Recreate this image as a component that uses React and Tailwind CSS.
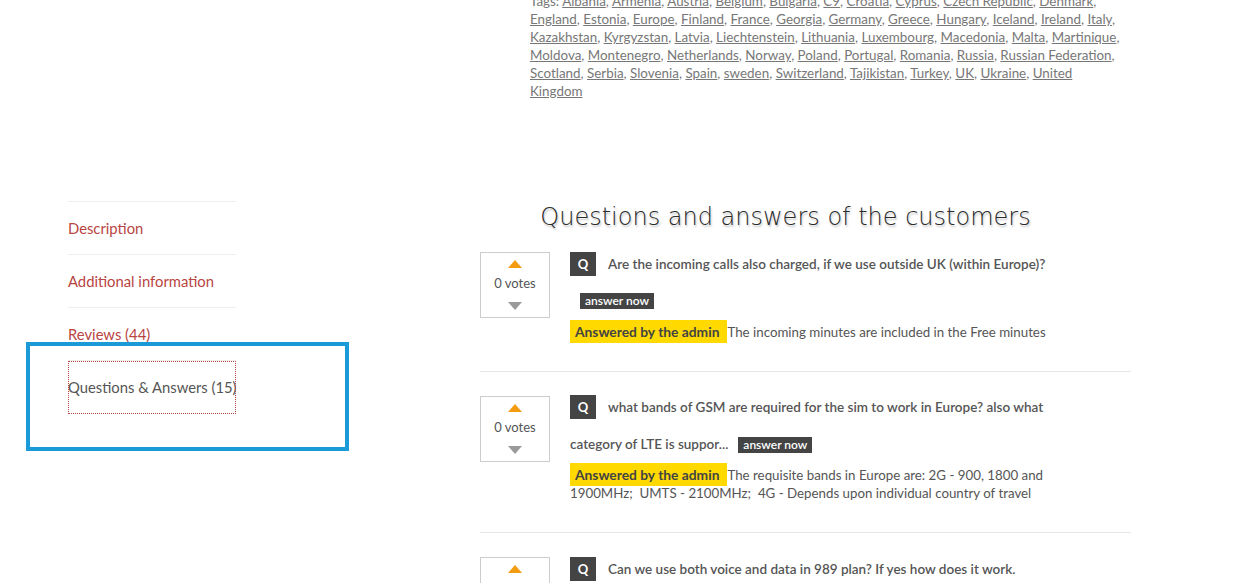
import React from 'react';

const tags = [
  'Albania', 'Armenia', 'Austria', 'Belgium', 'Bulgaria', 'C9', 'Croatia', 'Cyprus', 'Czech Republic', 'Denmark',
  'England', 'Estonia', 'Europe', 'Finland', 'France', 'Georgia', 'Germany', 'Greece', 'Hungary', 'Iceland', 'Ireland', 'Italy',
  'Kazakhstan', 'Kyrgyzstan', 'Latvia', 'Liechtenstein', 'Lithuania', 'Luxembourg', 'Macedonia', 'Malta', 'Martinique',
  'Moldova', 'Montenegro', 'Netherlands', 'Norway', 'Poland', 'Portugal', 'Romania', 'Russia', 'Russian Federation',
  'Scotland', 'Serbia', 'Slovenia', 'Spain', 'sweden', 'Switzerland', 'Tajikistan', 'Turkey', 'UK', 'Ukraine', 'United Kingdom',
];

const tabs = [
  { label: 'Description' },
  { label: 'Additional information' },
  { label: 'Reviews (44)' },
  { label: 'Questions & Answers (15)', active: true },
];

const questions = [
  {
    q: 'Are the incoming calls also charged, if we use outside UK (within Europe)?',
    a: 'The incoming minutes are included in the Free minutes',
  },
  {
    q: 'what bands of GSM are required for the sim to work in Europe? also what category of LTE is suppor...',
    a: 'The requisite bands in Europe are: 2G - 900, 1800 and 1900MHz;\u00a0 UMTS - 2100MHz;\u00a0 4G - Depends upon individual country of travel',
  },
  {
    q: 'Can we use both voice and data in 989 plan? If yes how does it work.',
    a: 'Yes',
  },
];

const font = { fontFamily: '"Source Sans Pro", Lato, "Noto Sans", sans-serif' };

const VoteBox = () => (
  <div className="w-[70px] h-[66px] shrink-0 border border-[#cccccc] flex flex-col items-center pt-[7px]">
    <div className="w-0 h-0 border-l-[7px] border-r-[7px] border-b-[8px] border-l-transparent border-r-transparent border-b-[#f39c12]" />
    <div className="text-[13px] leading-[18px] text-[#555] mt-[6px]">0 votes</div>
    <div className="w-0 h-0 border-l-[7px] border-r-[7px] border-t-[8px] border-l-transparent border-r-transparent border-t-[#9a9a9a] mt-[10px]" />
  </div>
);

const QuestionItem = ({ item, first }) => (
  <div className={`flex items-start gap-[20px] border-b border-[#e6e6e6] pb-[30px] ${first ? '' : 'pt-[24px]'}`}>
    <VoteBox />
    <div className="-mt-[6.5px] w-[500px]">
      <p className="leading-[37px] text-[13.5px] font-semibold text-[#555]">
        <span className="inline-block align-middle w-[26px] h-[24px] leading-[24px] bg-[#444] text-white text-center font-bold text-[13px] mr-[12px] -mt-[3px]">Q</span>
        {item.q}
        <span className="inline-block align-middle ml-[10px] px-[5px] h-[16px] leading-[16px] bg-[#444] text-white text-[12px] font-semibold -mt-[2px]">answer now</span>
      </p>
      <p className="mt-[3px] leading-[18px] text-[13.3px] text-[#555]">
        <span className="bg-[#ffd900] text-[#444] font-bold text-[13.8px] pl-[5px] pr-[8px] py-[3px]">Answered by the admin</span>
        {item.a}
      </p>
    </div>
  </div>
);

export default function App() {
  return (
    <div className="relative w-[1249px] h-[583px] overflow-hidden bg-white" style={font}>
      {/* tags */}
      <div className="-mt-[8px] ml-[530px] w-[590px] text-[13.4px] leading-[18px] text-[#777]">
        Tags:{' '}
        {tags.map((t, i) => (
          <React.Fragment key={t}>
            <a className="underline">{t}</a>
            {i < tags.length - 1 ? ', ' : ''}
          </React.Fragment>
        ))}
      </div>

      <div className="flex mt-[101px]">
        {/* tabs */}
        <ul className="ml-[68px] w-[168px] shrink-0 border-t border-[#eeeeee]">
          {tabs.map((t) => (
            <li key={t.label} className={`h-[53px] flex items-center text-[14.8px] whitespace-nowrap ${t.active ? 'text-[#555] outline outline-1 outline-dotted outline-[#b8453f] -outline-offset-1' : 'text-[#b8453f] border-b border-[#eeeeee]'}`}>
              {t.label}
            </li>
          ))}
        </ul>

        {/* questions */}
        <div className="ml-[244px] w-[651px]">
          <h2
            className="h-[32px] leading-[32px] text-center text-[24px] text-[#2a2a2a] pr-[40px]"
            style={{ fontFamily: '"DejaVu Sans", sans-serif', fontWeight: 200, textShadow: '1px 2px 2px rgba(0,0,0,0.25)' }}
          >
            Questions and answers of the customers
          </h2>
          <div className="mt-[19px]">
            {questions.map((q, i) => (
              <QuestionItem key={i} item={q} first={i === 0} />
            ))}
          </div>
        </div>
      </div>

      {/* highlight annotation */}
      <div className="absolute left-[26px] top-[342px] w-[323px] h-[109px] border-[4px] border-[#1a9bd7] pointer-events-none" />
    </div>
  );
}
